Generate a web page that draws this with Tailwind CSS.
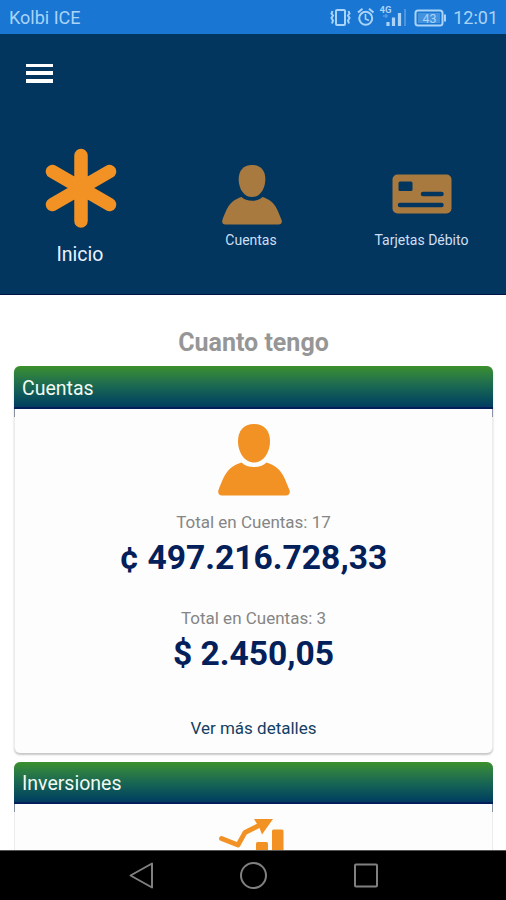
<!DOCTYPE html>
<html lang="es">

<head>
  <meta charset="UTF-8">
  <meta name="viewport" content="width=device-width, initial-scale=1.0">
  <title>Cuanto tengo</title>
  <script src="https://cdn.jsdelivr.net/npm/@tailwindcss/browser@4"></script>
</head>

<body class="bg-white font-[Roboto,sans-serif]">
  <div class="w-[506px] h-[900px] flex flex-col overflow-hidden">

    <!-- Status bar -->
    <div class="h-[34px] shrink-0 bg-[#1976d2] flex items-center justify-between pl-[9px] pr-[8px] text-[#a9d3f8]">
      <span class="text-[18px] leading-[34px] pt-[2px]">Kolbi ICE</span>
      <div class="flex items-center">
        <svg class="w-[120px] h-[34px]" viewBox="328 0 120 34" fill="none" stroke="currentColor" stroke-width="2">
          <!-- vibrate -->
          <rect x="336" y="10" width="9" height="15" rx="1" />
          <path d="M332.500 11l-1 2.500 1.500 2-1.500 2.500 1.500 2.500-1 3M348.500 11l1 2.500-1.500 2 1.500 2.500-1.500 2.500 1 3" stroke-width="2" />
          <!-- alarm -->
          <circle cx="365.700" cy="18.300" r="6.500" />
          <path d="M365.500 14v5l3.500 1.500" stroke-width="1.600" />
          <path d="M358 12.500l4.500-3.800M373.500 12.500l-4.500-3.800" />
          <!-- signal -->
          <text x="379.500" y="12.500" font-size="9.500" font-weight="700" fill="currentColor" stroke="none">4G</text>
          <path d="M386 14v4M383 16h5" opacity=".4" stroke-width="1.500" />
          <path d="M388 22v4M393.500 17.500V26M399.500 13V26" stroke-width="3.200" />
          <path d="M405 9v17" stroke-width="2" opacity=".35" />
          <!-- battery -->
          <rect x="415.500" y="10.500" width="27" height="15" rx="2.500" />
          <path d="M445 14.500v7" stroke-width="2" />
          <rect x="418" y="13" width="22" height="10" fill="currentColor" stroke="none" opacity=".3" />
          <text x="429.500" y="23" font-size="12.500" text-anchor="middle" fill="currentColor" stroke="none">43</text>
        </svg>
        <span class="ml-[5px] text-[18px] leading-[34px] pt-[2px]">12:01</span>
      </div>
    </div>

    <!-- Header -->
    <header class="h-[261px] shrink-0 bg-[#03365f] border-b border-[#04124a] text-[#eaf2ff]">
      <div class="pl-[26px] pt-[30px]">
        <div class="flex flex-col gap-1 w-[27px]">
          <span class="h-[3px] bg-white"></span>
          <span class="h-[4px] bg-white"></span>
          <span class="h-[4px] bg-white"></span>
        </div>
      </div>

      <nav class="grid grid-cols-3 w-[510px] -ml-1 pt-[65px]">
        <div class="flex flex-col items-center">
          <svg class="w-[74px] h-[80px]" viewBox="44 148 74 80" stroke="#f29224" stroke-width="13.500" stroke-linecap="round">
            <path d="M81 155.500V221M52.500 171.500L109.500 204.500M109.500 171.500L52.500 204.500" />
          </svg>
          <span class="text-[19.5px] leading-[24px] mt-[15px] mr-[2px]">Inicio</span>
        </div>
        <div class="flex flex-col items-center text-[#cfdff5]">
          <svg class="w-[60px] h-[60px] mt-[17px] ml-px" viewBox="0 0 72 72" fill="#a97a3f">
            <path d="M36 0c10.500 0 16 7 16 17 0 11.500-6.500 21.500-16 21.500S20 28.500 20 17C20 7 25.500 0 36 0z" />
            <path d="M23.500 38.500c3 3 7.500 4.500 12.500 4.500s9.500-1.500 12.500-4.500C64 43 66.500 54 71.500 66c1 3-.5 5.500-3.500 5.500H4C1 71.500-.5 69 .5 66 5.500 54 8 43 23.500 38.500z" />
          </svg>
          <span class="text-[14px] leading-[20px] mt-[5px]">Cuentas</span>
        </div>
        <div class="flex flex-col items-center text-[#cfdff5]">
          <svg class="w-[60px] h-[40px] mt-[26px] ml-[2px]" viewBox="0 0 60 40">
            <rect x=".5" y=".5" width="59" height="39" rx="5" fill="#a97a3f" />
            <rect x="6.500" y="7.500" width="14" height="9.500" rx="1.500" fill="#03365f" />
            <path d="M31 20H49.500M8 31H49.500" stroke="#03365f" stroke-width="4.500" stroke-linecap="round" />
          </svg>
          <span class="text-[14px] leading-[20px] mt-[16px] ml-px">Tarjetas Débito</span>
        </div>
      </nav>
    </header>

    <!-- Content -->
    <main class="flex-1 min-h-0 overflow-hidden flex flex-col pl-[14px] pr-[13px]">
      <h1 class="text-center text-[25px] leading-[30px] font-bold text-[#969696] mt-[33px]">Cuanto tengo</h1>

      <section class="mt-[8px] h-[387px] shrink-0 rounded-md bg-[#fdfdfd] border-x border-[#ececec] shadow-[0_2px_2px_rgba(0,0,0,0.22)]">
        <div class="relative -mx-px h-[43px] rounded-t-md border-b-2 border-[#021f5c] bg-linear-to-b from-[#3b902a] to-[#033d60] pl-[8px] text-[19.5px] leading-[45px] text-[#f2fbf2]">
          Cuentas
          <i class="absolute left-0 top-[43px] h-[8px] w-px bg-[#8b93a3]"></i>
          <i class="absolute right-0 top-[43px] h-[8px] w-px bg-[#8b93a3]"></i>
        </div>
        <div class="flex flex-col items-center">
          <svg class="w-[72px] h-[72px] mt-[15px]" viewBox="0 0 72 72" fill="#f29224">
            <path d="M36 0c10.500 0 16 7 16 17 0 11.500-6.500 21.500-16 21.500S20 28.500 20 17C20 7 25.500 0 36 0z" />
            <path d="M23.500 38.500c3 3 7.500 4.500 12.500 4.500s9.500-1.500 12.500-4.500C64 43 66.500 54 71.500 66c1 3-.5 5.500-3.500 5.500H4C1 71.500-.5 69 .5 66 5.500 54 8 43 23.500 38.500z" />
          </svg>
          <p class="text-[17px] leading-[20px] mt-[16px] text-[#858585]">Total en Cuentas: 17</p>
          <p class="text-[33.6px] leading-[40px] mt-[6px] font-bold text-[#03205a]">¢ 497.216.728,33</p>
          <p class="text-[17px] leading-[20px] mt-[30px] text-[#858585]">Total en Cuentas: 3</p>
          <p class="text-[33.6px] leading-[40px] mt-[6px] font-bold text-[#03205a]">$ 2.450,05</p>
          <p class="text-[17px] leading-[20px] mt-[44px] text-[#133f63]">Ver más detalles</p>
        </div>
      </section>

      <section class="mt-[9px] h-[387px] shrink-0 rounded-md bg-[#fdfdfd] border-x border-[#ececec]">
        <div class="relative -mx-px h-[42px] rounded-t-md border-b-2 border-[#021f5c] bg-linear-to-b from-[#3b902a] to-[#033d60] pl-[8px] text-[19.5px] leading-[44px] text-[#f2fbf2]">
          Inversiones
          <i class="absolute left-0 top-[42px] h-[8px] w-px bg-[#8b93a3]"></i>
          <i class="absolute right-0 top-[42px] h-[8px] w-px bg-[#8b93a3]"></i>
        </div>
        <div class="flex justify-center">
          <svg class="w-[72px] h-[72px] mt-[14px]" viewBox="218 818 72 72" fill="#f29224">
            <path d="M221.500 838.500L238 845l7-12.500 15-7.500" fill="none" stroke="#f29224" stroke-width="4.800" stroke-linecap="round" stroke-linejoin="round" />
            <path d="M254 819h19l-11 15.500-2.500-6.500z" />
            <rect x="256" y="842" width="12" height="46" rx="1.500" />
            <rect x="272" y="829.500" width="11.500" height="58" rx="1.500" />
          </svg>
        </div>
      </section>
    </main>

    <!-- Navigation bar -->
    <div class="h-[50px] shrink-0 bg-black border-t border-[#555] flex justify-center">
      <svg class="w-[260px] h-[49px]" viewBox="123 851 260 49" fill="none" stroke="#808080" stroke-width="2" stroke-linejoin="round">
        <path d="M152 863.500v24L130.500 875.500z" />
        <circle cx="253.500" cy="875.500" r="12.500" />
        <rect x="355" y="864.500" width="22" height="22" rx="1" />
      </svg>
    </div>
  </div>
</body>

</html>
